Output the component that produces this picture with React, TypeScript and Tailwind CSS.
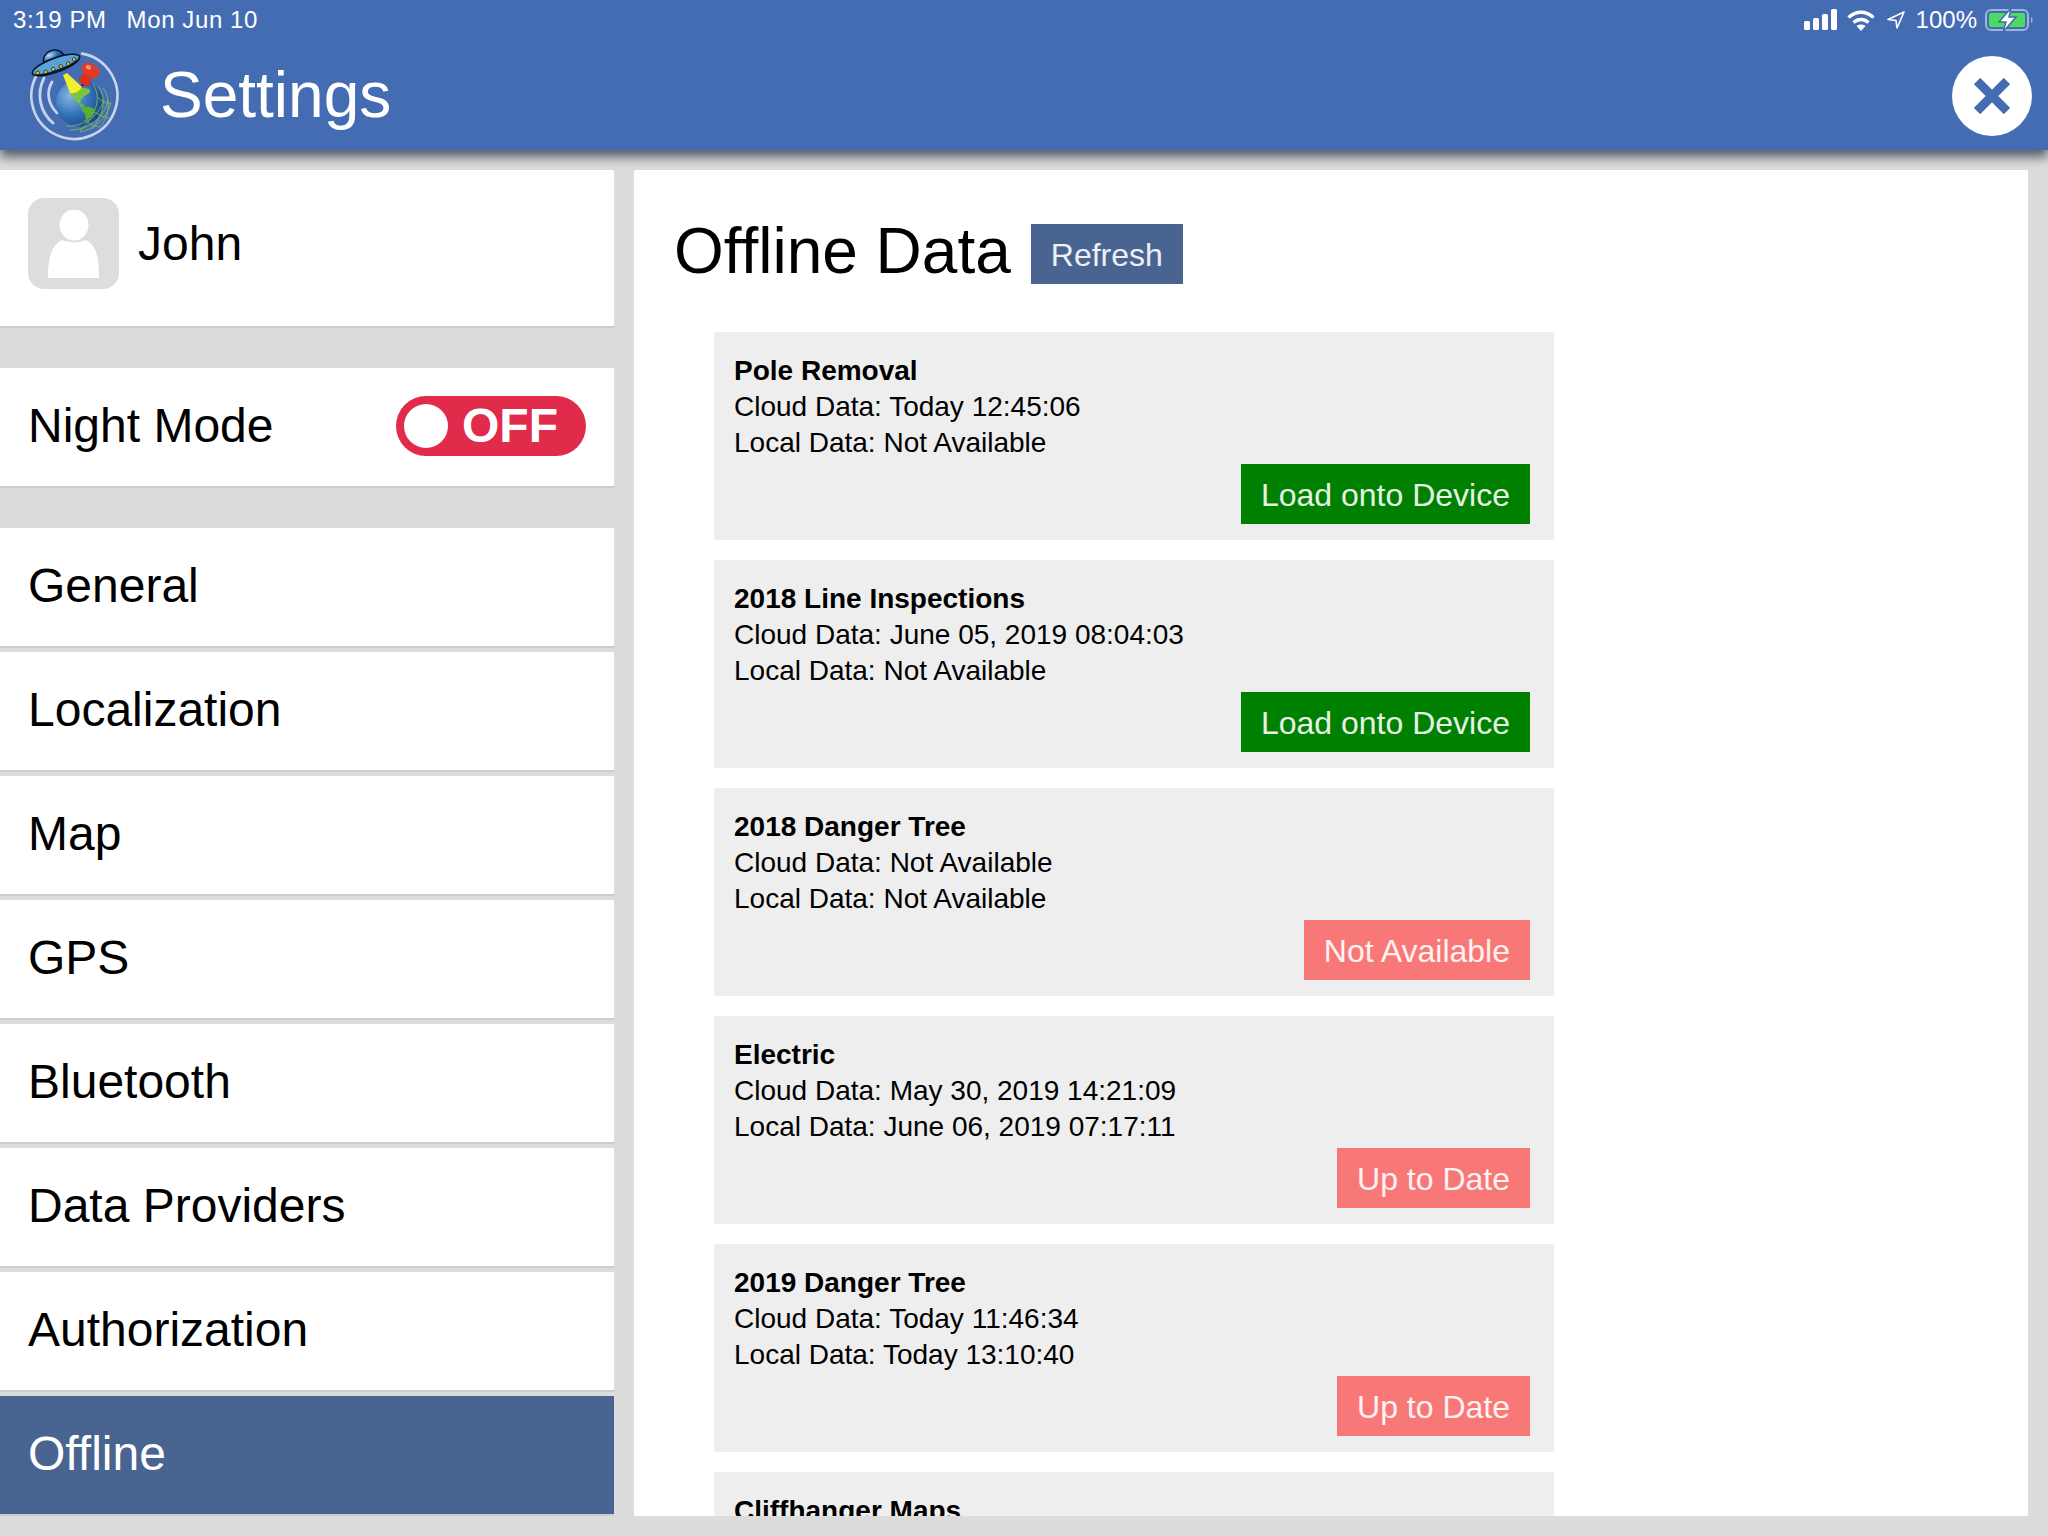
import React from 'react';

const menuItems = ['General', 'Localization', 'Map', 'GPS', 'Bluetooth', 'Data Providers', 'Authorization'];

type Entry = { name: string; cloud?: string; local?: string; action?: string; ok?: boolean };

const entries: Entry[] = [
  { name: 'Pole Removal', cloud: 'Today 12:45:06', local: 'Not Available', action: 'Load onto Device', ok: true },
  { name: '2018 Line Inspections', cloud: 'June 05, 2019 08:04:03', local: 'Not Available', action: 'Load onto Device', ok: true },
  { name: '2018 Danger Tree', cloud: 'Not Available', local: 'Not Available', action: 'Not Available' },
  { name: 'Electric', cloud: 'May 30, 2019 14:21:09', local: 'June 06, 2019 07:17:11', action: 'Up to Date' },
  { name: '2019 Danger Tree', cloud: 'Today 11:46:34', local: 'Today 13:10:40', action: 'Up to Date' },
  { name: 'Cliffhanger Maps' },
];

// app logo: saucer, pin and globe
const Logo = () => (
  <svg width="110" height="110" viewBox="0 0 110 110" className="block">
    <defs>
      <radialGradient id="globe" cx="30%" cy="35%" r="80%">
        <stop offset="0%" stopColor="#86b6e2" />
        <stop offset="50%" stopColor="#3374ba" />
        <stop offset="100%" stopColor="#11407f" />
      </radialGradient>
      <radialGradient id="dome" cx="35%" cy="35%" r="70%">
        <stop offset="0%" stopColor="#c4e2f7" />
        <stop offset="55%" stopColor="#2c6fb5" />
        <stop offset="100%" stopColor="#134179" />
      </radialGradient>
    </defs>
    <g fill="none" stroke="#c6d4ec" strokeLinecap="round">
      <path d="M62 13.6A43 43 0 1 1 18 33" strokeWidth="2.6" />
      <path d="M24 38C16 54 20 72 33 83" strokeWidth="2.8" />
      <path d="M32 42C26 52 28 64 37 73" strokeWidth="2.8" />
    </g>
    <circle cx="59.5" cy="63" r="23.5" fill="url(#globe)" />
    <g fill="none" stroke="#7fbf5a" strokeWidth="0.9" opacity="0.95">
      <path d="M46 86C60 87 78 79 84 60" />
      <path d="M50 90C66 90 84 80 88 60" />
      <path d="M60 92C72 90 87 80 91 62" />
      <path d="M78 46C86 55 85 73 72 89" />
      <path d="M83 48C91 58 90 76 80 87" />
      <path d="M73 44C81 56 78 74 60 91" />
      <path d="M64 80C70 84 76 87 80 87" />
      <path d="M72 70C77 74 82 77 89 78" />
      <path d="M78 58C82 61 85 63 91 64" />
    </g>
    <path d="M50 52C55 48 62 47 69 49C72 51 69 54 66 55C63 56 63 59 60 60C61 62 62 63 58 63C55 60 52 57 50 52Z" fill="#7fc241" />
    <path d="M58 63C61 63 63 65 65 66L62 68C60 66 59 65 58 63Z" fill="#6db53a" />
    <path d="M62 68C68 65 76 68 75 72C73 76 69 77 67 81C65 79 66 75 64 73C62 71 61 70 62 68Z" fill="#5bad33" />
    <path d="M43 35L47 33L62 47C59 52 54 54 50 53Z" fill="#fbf22b" opacity="0.95" />
    <g transform="translate(0 -3) rotate(-20 36 28)">
      <path d="M25 24C25 9 47 9 47 24Z" fill="url(#dome)" stroke="#07101f" strokeWidth="1.4" />
      <ellipse cx="36" cy="28" rx="25" ry="7" fill="#5aa3d8" stroke="#07101f" strokeWidth="1.6" />
      <path d="M12 29C20 37 52 37 60 29C52 34 20 34 12 29Z" fill="#0b1a33" />
      {[16, 24, 32, 40, 48, 55].map((x, i) => (
        <circle key={x} cx={x} cy={i === 0 || i === 5 ? 29 : 31} r="1.8" fill="#f3c81e" stroke="#07101f" strokeWidth="0.7" />
      ))}
    </g>
    <g transform="translate(62 46) rotate(29) scale(1.15)">
      <path d="M-1 0L-1.5 -5H2L1 0Z" fill="#14202f" />
      <path d="M-5.5 -3C-2 -1 3 -1 5.5 -3L3.5 -12H-3.5Z" fill="#d9301f" />
      <rect x="-8" y="-21" width="16" height="11" rx="5" fill="#e23c26" />
      <ellipse cx="-3" cy="-17" rx="2.4" ry="2" fill="#f58a70" />
    </g>
  </svg>
);

const StatusIcons = () => (
  <div className="flex items-center text-white">
    <svg width="34" height="22" viewBox="0 0 34 22" className="block" fill="white">
      <rect x="0" y="12" width="6" height="9" rx="1.5" />
      <rect x="9" y="9" width="6" height="12" rx="1.5" />
      <rect x="18" y="5" width="6" height="16" rx="1.5" />
      <rect x="27" y="0" width="6" height="21" rx="1.5" />
    </svg>
    <svg width="28" height="21" viewBox="0 0 28 21" className="ml-[9px] block" fill="none" stroke="white" strokeWidth="3.4">
      <path d="M1.5 7.5C9 0.5 19 0.5 26.5 7.5" />
      <path d="M6.5 12.5C11 8.5 17 8.5 21.5 12.5" />
      <path d="M14 21L9.5 16C12 14 16 14 18.5 16Z" fill="white" stroke="none" />
    </svg>
    <svg width="18" height="18" viewBox="0 0 18 18" className="ml-[12px] block" fill="none" stroke="white" strokeWidth="1.6" strokeLinejoin="round">
      <path d="M17 1L1 8.5L9 9.5L10 17Z" />
    </svg>
    <span className="ml-[11px] text-[24px] leading-[28px]">100%</span>
    <svg width="50" height="24" viewBox="0 0 50 24" className="ml-[8px] block">
      <rect x="1" y="2" width="42" height="20" rx="5" fill="none" stroke="#9fb4da" strokeWidth="2" />
      <rect x="4" y="5" width="36" height="14" rx="2" fill="#4cd964" />
      <path d="M46 9C48 9.5 48 14.5 46 15Z" fill="#9fb4da" />
      <path d="M26 0L14 14H21L18 24L31 9H24Z" fill="white" stroke="#446cb3" strokeWidth="1.5" />
    </svg>
  </div>
);

const MenuRow = ({ label, active }: { label: string; active?: boolean }) => (
  <div className={`flex h-[120px] items-center border-b-2 border-[#cccccc] pb-[3px] pl-7 text-[48px] ${active ? 'bg-[#4a6491] text-white' : 'bg-white text-black'}`}>
    {label}
  </div>
);

const DataCard = ({ entry }: { entry: Entry }) => (
  <div className="h-[208px] shrink-0 bg-[#eeeeee] pl-5 pr-6 pt-[21px] pb-4 text-[28px] leading-9 text-black">
    <div className="font-bold">{entry.name}</div>
    {entry.cloud && <div>Cloud Data: {entry.cloud}</div>}
    {entry.local && <div>Local Data: {entry.local}</div>}
    {entry.action && (
      <div className="mt-[3px] flex justify-end">
        <button className={`h-[60px] px-5 pt-0.5 text-[32px] leading-none text-white/90 ${entry.ok ? 'bg-[#008000]' : 'bg-[#f87878]'}`}>
          {entry.action}
        </button>
      </div>
    )}
  </div>
);

export default function App() {
  return (
    <div className="flex h-screen flex-col overflow-hidden bg-[#dcdcdc] font-['Liberation_Sans',Arial,sans-serif]">
      {/* Header */}
      <header className="relative z-10 h-[150px] shrink-0 bg-[#446cb3] text-white shadow-[0_7px_10px_rgba(40,50,70,0.75)]">
        <div className="flex h-10 items-center justify-between pl-[13px] pr-[13px] text-[24px]">
          <div className="flex gap-5 tracking-[0.6px]">
            <span>3:19 PM</span>
            <span>Mon Jun 10</span>
          </div>
          <StatusIcons />
        </div>
        <div className="flex h-[110px] items-center pr-4">
          <div className="ml-5">
            <Logo />
          </div>
          <h1 className="ml-[30px] flex-1 text-[64px] font-normal leading-none">Settings</h1>
          <button className="mt-0.5 flex h-20 w-20 items-center justify-center rounded-full bg-white">
            <svg width="36" height="36" viewBox="0 0 36 36" fill="none" stroke="#446cb3" strokeWidth="9">
              <path d="M3 3L33 33M33 3L3 33" />
            </svg>
          </button>
        </div>
      </header>

      <main className="flex min-h-0 flex-1 gap-5 py-5 pr-5">
        {/* Sidebar */}
        <aside className="w-[614px] shrink-0">
          <div className="flex h-[158px] items-center border-b-2 border-[#cccccc] bg-white pb-[9px] pl-7">
            <div className="flex h-[91px] w-[91px] items-center justify-center rounded-2xl bg-[#dddddd]">
              <svg width="52" height="68" viewBox="0 0 52 68" fill="white">
                <ellipse cx="26" cy="15" rx="14.5" ry="15.5" />
                <path d="M0 68C0 48 3 36 14 30C20 33 32 33 38 30C49 36 51 48 51 68Z" />
              </svg>
            </div>
            <span className="ml-[19px] text-[48px] text-black">John</span>
          </div>

          <div className="mt-10 flex h-[120px] items-center justify-between border-b-2 border-[#cccccc] bg-white pb-[2px] pl-7 pr-7">
            <span className="text-[48px] text-black">Night Mode</span>
            <div className="flex h-[60px] w-[190px] items-center rounded-full bg-[#e12b4a] pl-2">
              <span className="h-[44px] w-[44px] rounded-full bg-white" />
              <span className="ml-[14px] text-[48px] font-bold leading-none text-white">OFF</span>
            </div>
          </div>

          <div className="mt-10 flex flex-col gap-1">
            {menuItems.map(item => (
              <MenuRow key={item} label={item} />
            ))}
            <MenuRow label="Offline" active />
          </div>
        </aside>

        {/* Offline data panel */}
        <section className="min-w-0 flex-1 overflow-hidden bg-white pl-10 pt-[44px]">
          <div className="flex h-[74px] items-start">
            <h2 className="text-[64px] font-normal leading-[74px] text-black">Offline Data</h2>
            <button className="ml-5 mt-[10px] h-[60px] bg-[#4a6491] px-5 pt-0.5 text-[32px] leading-none text-white/90">Refresh</button>
          </div>
          <div className="ml-10 mt-[44px] flex w-[840px] flex-col gap-5">
            {entries.map(entry => (
              <DataCard key={entry.name} entry={entry} />
            ))}
          </div>
        </section>
      </main>
    </div>
  );
}
